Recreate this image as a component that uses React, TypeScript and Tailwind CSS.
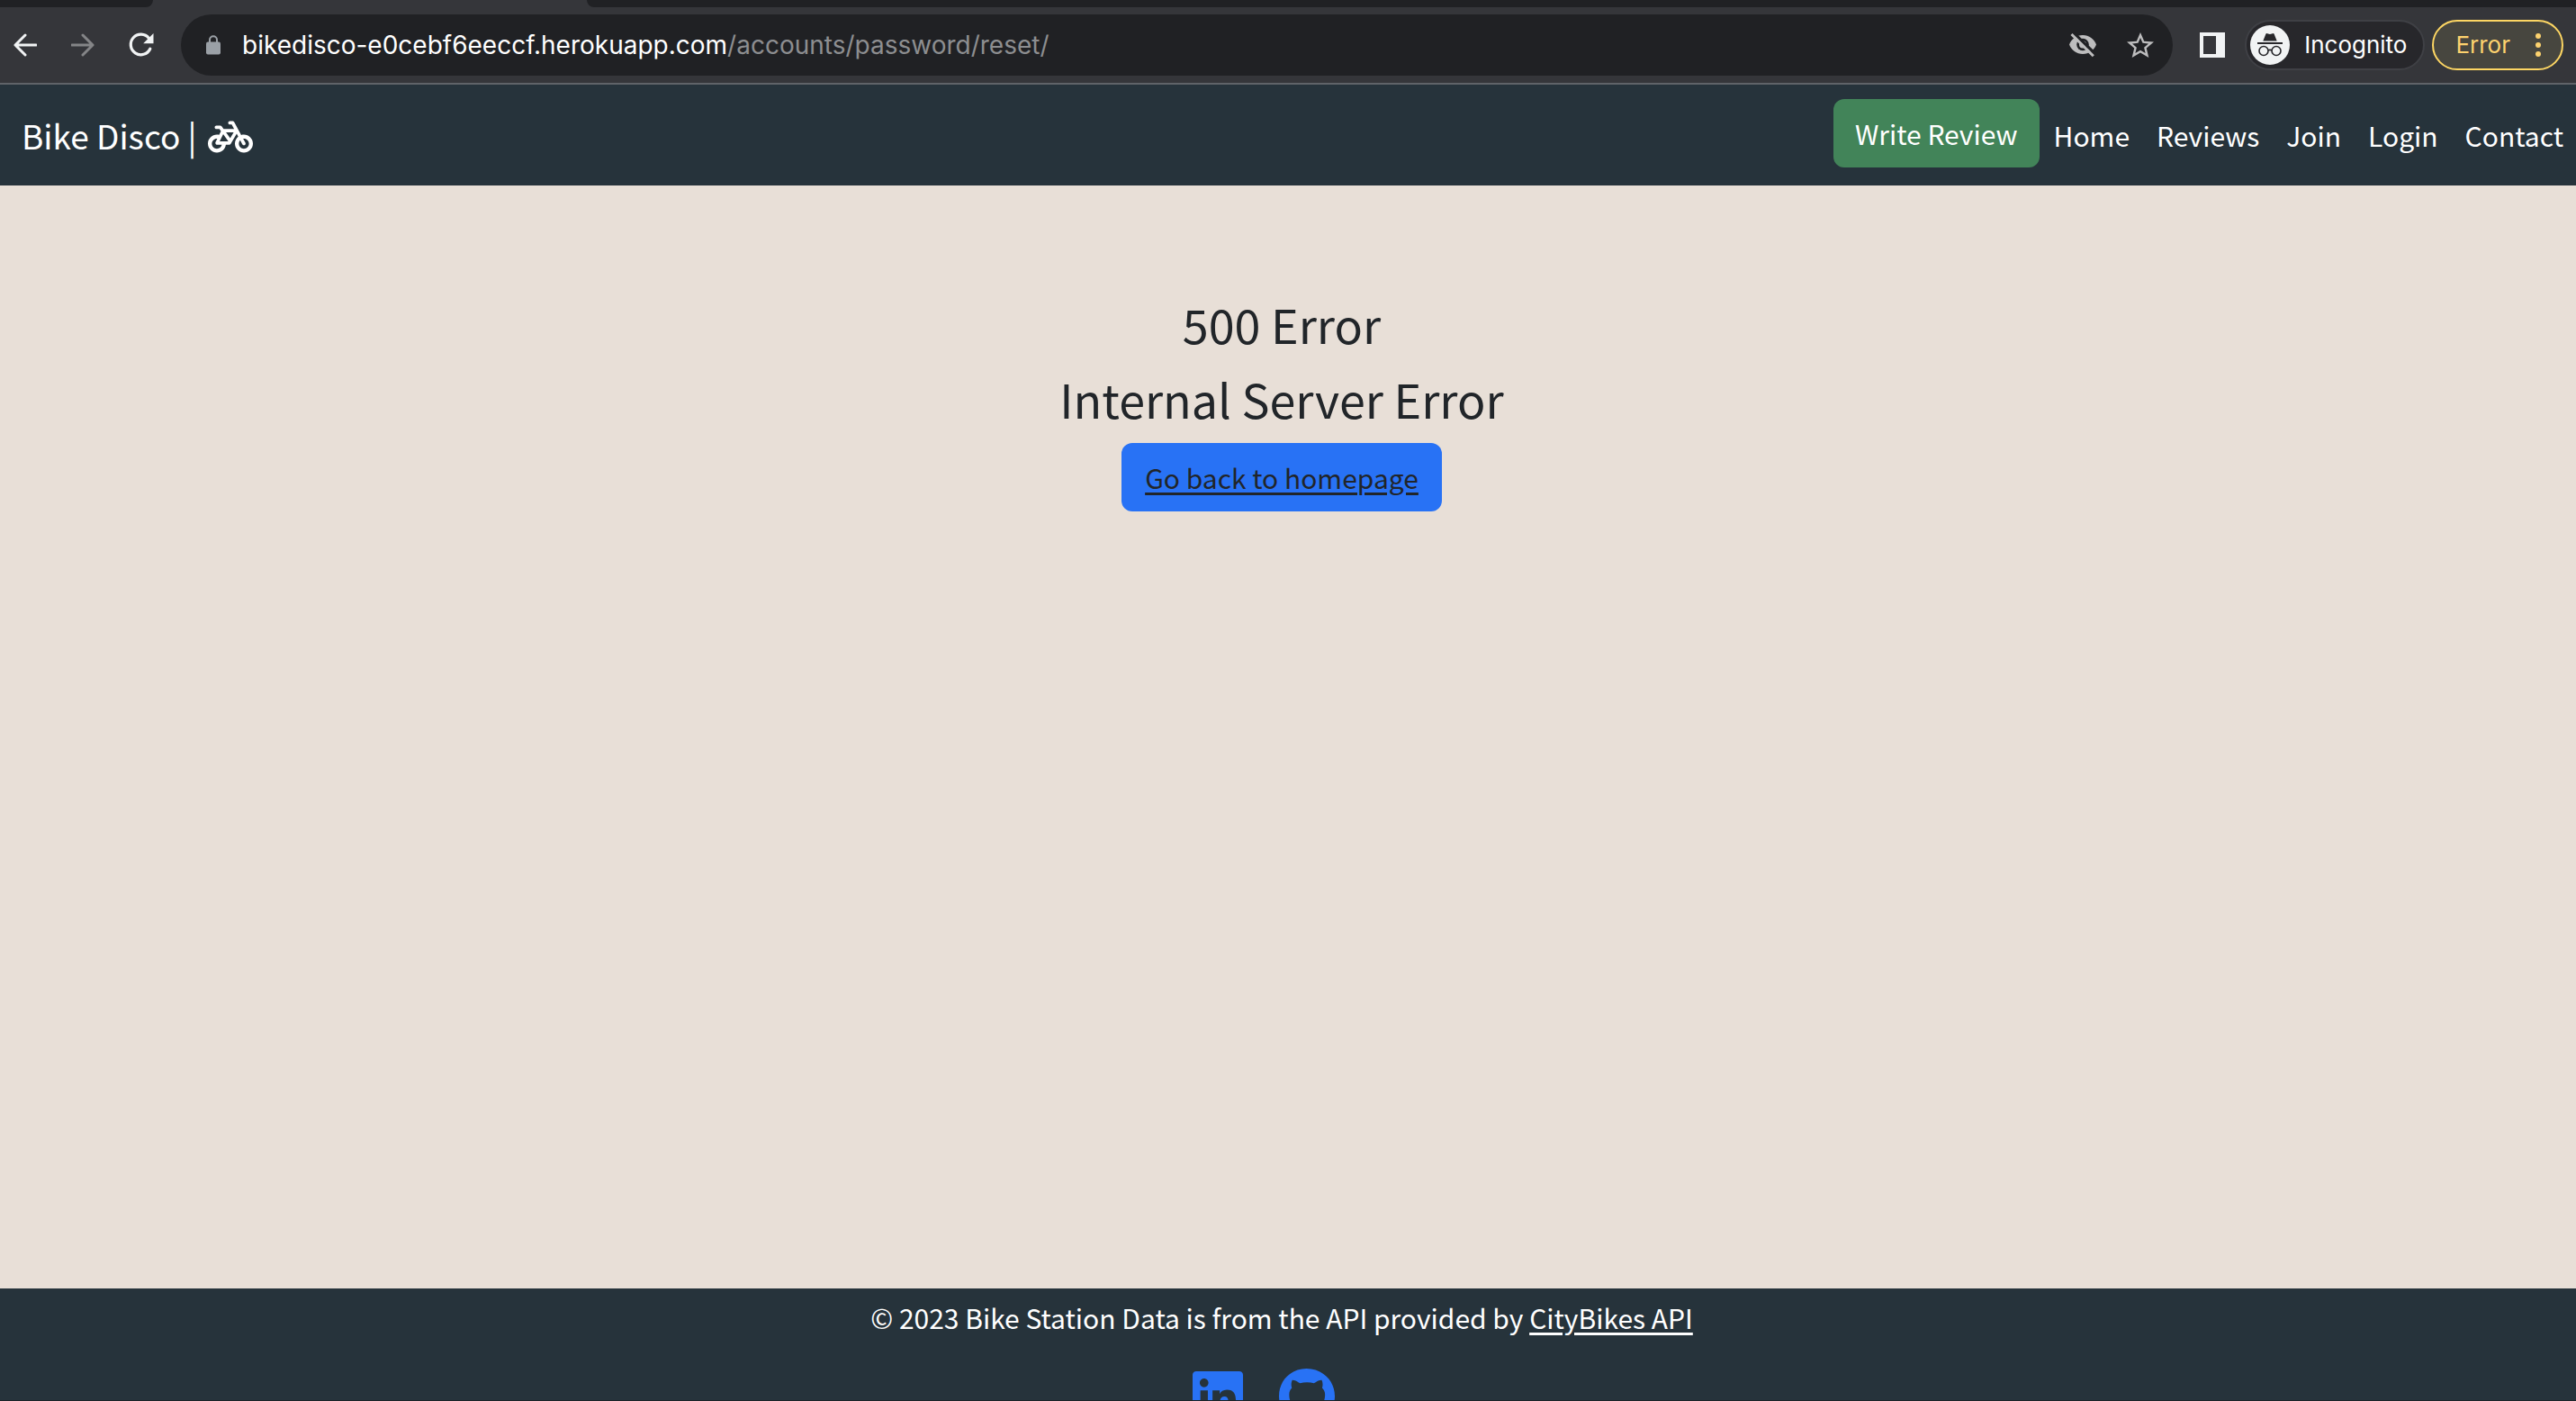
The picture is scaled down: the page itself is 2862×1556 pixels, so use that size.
import type { ReactNode } from "react";
import { FaBicycle, FaGithub, FaLinkedin } from "react-icons/fa6";

function BackIcon() {
  return (
    <svg viewBox="0 0 26 26" className="size-[26px]" fill="none" stroke="currentColor" strokeWidth="3" strokeLinecap="round" strokeLinejoin="round" aria-hidden="true">
      <path d="M13 2 2 13l11 11M2 13h23" />
    </svg>
  );
}

function ForwardIcon() {
  return (
    <svg viewBox="0 0 26 26" className="size-[26px]" fill="none" stroke="currentColor" strokeWidth="3" strokeLinecap="round" strokeLinejoin="round" aria-hidden="true">
      <path d="m13 2 11 11-11 11M24 13H1" />
    </svg>
  );
}

function ReloadIcon() {
  return (
    <svg viewBox="0 0 28 28" className="size-7" aria-hidden="true">
      <path d="M23.8 18.2A11.3 11.3 0 1 1 22.4 6.4" fill="none" stroke="currentColor" strokeWidth="3.2" strokeLinecap="round" />
      <path d="M27.5 1v11.3H16.2z" fill="currentColor" />
    </svg>
  );
}

function LockIcon() {
  return (
    <svg viewBox="0 0 16 22" className="h-[22px] w-4" aria-hidden="true">
      <rect x="0" y="7.5" width="16" height="14" rx="2" fill="currentColor" />
      <path d="M4 8.500V5.200a4 4 0 0 1 8 0V8.500" fill="none" stroke="currentColor" strokeWidth="2" />
    </svg>
  );
}

function EyeOffIcon() {
  return (
    <svg viewBox="0 0 30 28" className="h-7 w-[30px]" aria-hidden="true">
      <path d="M15 3C8 3 2.400 7.300 0 13.500 2.400 19.700 8 24 15 24s12.600-4.300 15-10.500C27.600 7.300 22 3 15 3Z" fill="currentColor" />
      <circle cx="15" cy="13.500" r="6.800" fill="#202124" />
      <circle cx="15" cy="13.500" r="4" fill="currentColor" />
      <path d="M5.200.8 30.500 25.600" stroke="#202124" strokeWidth="3.200" />
      <path d="M2.500 2 26.800 26.300" stroke="currentColor" strokeWidth="3" />
    </svg>
  );
}

function StarIcon() {
  return (
    <svg viewBox="0 0 30 28" className="h-7 w-[30px]" aria-hidden="true">
      <path
        d="M30 10.600 19.200 9.700 15 0 10.800 9.700 0 10.600l8.200 7L5.700 28 15 22.500 24.300 28l-2.500-10.400ZM15 19.700l-5.600 3.400 1.500-6.400L6 12.400l6.500-.6L15 5.900l2.500 5.900 6.500.6-4.900 4.300 1.500 6.400Z"
        fill="currentColor"
      />
    </svg>
  );
}

function SidePanelIcon() {
  return (
    <svg viewBox="0 0 28 28" className="size-7" aria-hidden="true">
      <path d="M0 0h28v28H0ZM4 4v20h14V4Z" fillRule="evenodd" fill="currentColor" />
    </svg>
  );
}

function IncognitoIcon() {
  return (
    <svg viewBox="0 0 44 44" className="size-11" aria-hidden="true">
      <circle cx="22" cy="22" r="22" fill="#f1f3f4" />
      <path d="M14.300 17.500 17.400 9.800q.5-1 1.600-.6l3 .8 3-.8q1.100-.4 1.600.6l3.100 7.700Z" fill="#27272b" />
      <path d="M8 19h28v2H8Z" fill="#27272b" />
      <g fill="none" stroke="#27272b" strokeWidth="1.600">
        <circle cx="15" cy="28.500" r="5" />
        <circle cx="29" cy="28.500" r="5" />
        <path d="M20 28q2-1.200 4 0" />
      </g>
    </svg>
  );
}

function MoreIcon() {
  return (
    <svg viewBox="0 0 6 28" className="h-7 w-1.5" fill="currentColor" aria-hidden="true">
      <circle cx="3" cy="4" r="3" />
      <circle cx="3" cy="14" r="3" />
      <circle cx="3" cy="24" r="3" />
    </svg>
  );
}

function IconButton({ label, className, children }: { label: string; className: string; children: ReactNode }) {
  return (
    <button type="button" aria-label={label} className={className}>
      {children}
    </button>
  );
}

function BrowserBar() {
  return (
    <div className="border-b-2 border-[#5f6368] bg-[#35363a] font-[Inter,sans-serif]">
      <div className="flex h-2 justify-between">
        <div className="w-[170px] rounded-br-2xl bg-[#202124]" />
        <div className="ml-[482px] flex-1 rounded-bl-2xl bg-[#202124]" />
      </div>
      <div className="flex h-[84px] items-center pr-3.5 pl-[15px] text-[#f1f3f4]">
        <IconButton label="Back" className="mr-[38px]"><BackIcon /></IconButton>
        <IconButton label="Forward" className="mr-[38px] text-[#848587]"><ForwardIcon /></IconButton>
        <IconButton label="Reload" className="mr-[30px]"><ReloadIcon /></IconButton>
        <div className="flex h-[68px] flex-1 items-center rounded-full bg-[#202124] pr-[21px] pl-7">
          <span className="text-[#9aa0a6]"><LockIcon /></span>
          <div role="textbox" aria-label="Address" className="ml-6 flex-1 text-[28px] leading-9 whitespace-nowrap text-[#8d8e90]">
            <span className="text-white">bikedisco-e0cebf6eeccf.herokuapp.com</span>/accounts/password/reset/
          </div>
          <IconButton label="Third-party cookies blocked" className="mr-[34px] text-[#bdbdbe]"><EyeOffIcon /></IconButton>
          <IconButton label="Bookmark this page" className="text-[#bdbdbe]"><StarIcon /></IconButton>
        </div>
        <IconButton label="Side panel" className="mr-[22px] ml-[30px]"><SidePanelIcon /></IconButton>
        <button type="button" className="mr-2 flex h-14 items-center gap-4 rounded-full border-2 border-[#3f4045] bg-[#27272b] pr-[18px] pl-1 text-[26px] leading-8 text-white">
          <IncognitoIcon />
          Incognito
        </button>
        <button type="button" className="flex h-14 items-center gap-7 rounded-full border-2 border-[#fdd663] bg-[#47463f] pr-[23px] pl-6 text-[26px] leading-8 text-[#fdd26e]">
          Error
          <MoreIcon />
        </button>
      </div>
    </div>
  );
}

const links = ["Home", "Reviews", "Join", "Login", "Contact"];

function SiteNav() {
  return (
    <header className="flex h-28 items-center justify-between bg-[#26333b] pr-3.5 pl-6 text-white">
      <a href="#home" className="flex items-center gap-3 text-[37px] leading-[60px]">
        Bike Disco |
        <FaBicycle className="mt-1 h-10 w-[50px]" aria-hidden="true" />
      </a>
      <nav className="flex items-center text-[30px] leading-[45px]">
        <a href="#write" className="mr-4 mb-1 rounded-xl bg-[#428459] px-6 pt-4 pb-[15px]">
          Write Review
        </a>
        <div className="flex gap-[30px]">
          {links.map((label) => (
            <a key={label} href={`#${label.toLowerCase()}`}>
              {label}
            </a>
          ))}
        </div>
      </nav>
    </header>
  );
}

export default function App() {
  return (
    <div className="flex h-screen flex-col overflow-hidden bg-[#e8dfd7] font-['Noto_Sans_CJK_SC',sans-serif]">
      <BrowserBar />
      <SiteNav />
      <main className="flex flex-1 flex-col items-center pt-[120px] pr-3.5 text-[#212529]">
        <h1 className="mb-4 text-[52px] leading-[67px]">500 Error</h1>
        <h1 className="mb-4 text-[52px] leading-[67px]">Internal Server Error</h1>
        <a href="#home" className="rounded-xl bg-[#2872f5] px-[26px] pt-4 pb-[15px] text-[30px] leading-[45px] underline decoration-[3px] underline-offset-4">
          Go back to homepage
        </a>
      </main>
      <footer className="flex h-[125px] shrink-0 flex-col items-center overflow-hidden border-b border-[#1c2428] bg-[#26333b] pt-2.5 pr-3.5 text-white">
        <p className="mb-[33px] text-[30px] leading-[45px]">
          © 2023 Bike Station Data is from the API provided by{" "}
          <a href="#citybikes" className="underline decoration-[3px] underline-offset-4">CityBikes API</a>
        </p>
        <div className="flex gap-10 pr-10 text-[#2872f5]">
          <a href="#linkedin" aria-label="LinkedIn"><FaLinkedin className="h-16 w-14" /></a>
          <a href="#github" aria-label="GitHub"><FaGithub className="h-16 w-[62px]" /></a>
        </div>
      </footer>
    </div>
  );
}
